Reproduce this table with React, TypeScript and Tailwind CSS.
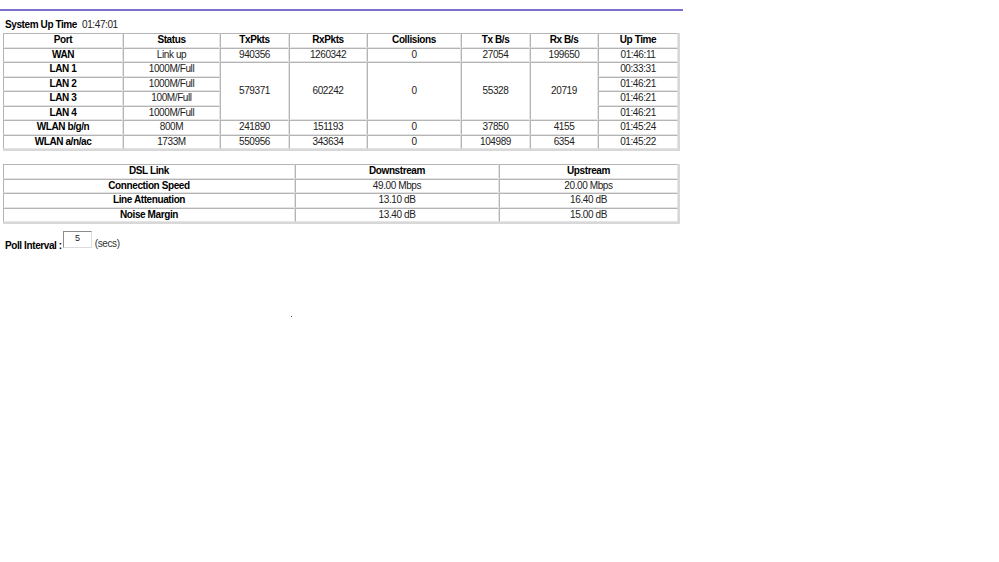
import React from 'react'

const ports = [
  { port: 'WAN', status: 'Link up', tx: '940356', rx: '1260342', col: '0', txb: '27054', rxb: '199650', up: '01:46:11' },
]

const lans = [
  { port: 'LAN 1', status: '1000M/Full', up: '00:33:31' },
  { port: 'LAN 2', status: '1000M/Full', up: '01:46:21' },
  { port: 'LAN 3', status: '100M/Full', up: '01:46:21' },
  { port: 'LAN 4', status: '1000M/Full', up: '01:46:21' },
]

const wlans = [
  { port: 'WLAN b/g/n', status: '800M', tx: '241890', rx: '151193', col: '0', txb: '37850', rxb: '4155', up: '01:45:24' },
  { port: 'WLAN a/n/ac', status: '1733M', tx: '550956', rx: '343634', col: '0', txb: '104989', rxb: '6354', up: '01:45:22' },
]

const dsl = [
  { label: 'Connection Speed', down: '49.00 Mbps', up: '20.00 Mbps' },
  { label: 'Line Attenuation', down: '13.10 dB', up: '16.40 dB' },
  { label: 'Noise Margin', down: '13.40 dB', up: '15.00 dB' },
]

const td = 'border-t border-l border-[#b4b4b4] border-r border-r-[#e4e4e4] border-b border-b-[#e4e4e4] p-0 text-center align-middle h-[14.5px] text-[#222]'
const th = td + ' font-bold text-black'

export default function App() {
  return (
    <div className="min-h-[562px] w-[999px] bg-white text-black text-[10px] leading-none tracking-[-0.4px]" style={{ fontFamily: '"Liberation Sans", Arial, sans-serif' }}>
      <div className="pt-[9px]">
        <div className="w-[683px] h-[2px] bg-[#7b6fd0]" />
      </div>

      <div className="pl-[5px] pt-[6px] h-[21px] flex items-center">
        <span className="font-bold">System Up Time</span>
        <span className="ml-[5px] text-[#222]">01:47:01</span>
      </div>

      <div className="pl-[3px] pt-[1px]">
        <table className="border-separate border-spacing-0 w-[675px] border-r-2 border-b-2 border-[#d8d8d8] table-fixed">
          <colgroup>
            <col className="w-[120px]" />
            <col className="w-[97px]" />
            <col className="w-[69px]" />
            <col className="w-[78px]" />
            <col className="w-[94px]" />
            <col className="w-[69px]" />
            <col className="w-[68px]" />
            <col className="w-[80px]" />
          </colgroup>
          <tbody>
            <tr>
              <td className={th}>Port</td>
              <td className={th}>Status</td>
              <td className={th}>TxPkts</td>
              <td className={th}>RxPkts</td>
              <td className={th}>Collisions</td>
              <td className={th}>Tx B/s</td>
              <td className={th}>Rx B/s</td>
              <td className={th}>Up Time</td>
            </tr>
            {ports.map((p) => (
              <tr key={p.port}>
                <td className={th}>{p.port}</td>
                <td className={td}>{p.status}</td>
                <td className={td}>{p.tx}</td>
                <td className={td}>{p.rx}</td>
                <td className={td}>{p.col}</td>
                <td className={td}>{p.txb}</td>
                <td className={td}>{p.rxb}</td>
                <td className={td}>{p.up}</td>
              </tr>
            ))}
            {lans.map((l, i) => (
              <tr key={l.port}>
                <td className={th}>{l.port}</td>
                <td className={td}>{l.status}</td>
                {i === 0 && (
                  <>
                    <td rowSpan={4} className={td}>579371</td>
                    <td rowSpan={4} className={td}>602242</td>
                    <td rowSpan={4} className={td}>0</td>
                    <td rowSpan={4} className={td}>55328</td>
                    <td rowSpan={4} className={td}>20719</td>
                  </>
                )}
                <td className={td}>{l.up}</td>
              </tr>
            ))}
            {wlans.map((p) => (
              <tr key={p.port}>
                <td className={th}>{p.port}</td>
                <td className={td}>{p.status}</td>
                <td className={td}>{p.tx}</td>
                <td className={td}>{p.rx}</td>
                <td className={td}>{p.col}</td>
                <td className={td}>{p.txb}</td>
                <td className={td}>{p.rxb}</td>
                <td className={td}>{p.up}</td>
              </tr>
            ))}
          </tbody>
        </table>
      </div>

      <div className="pl-[3px] pt-[13px]">
        <table className="border-separate border-spacing-0 w-[675px] border-r-2 border-b-2 border-[#d8d8d8] table-fixed">
          <colgroup>
            <col className="w-[292px]" />
            <col className="w-[204px]" />
            <col className="w-[179px]" />
          </colgroup>
          <tbody>
            <tr>
              <td className={th}>DSL Link</td>
              <td className={th}>Downstream</td>
              <td className={th}>Upstream</td>
            </tr>
            {dsl.map((d) => (
              <tr key={d.label}>
                <td className={th}>{d.label}</td>
                <td className={td}>{d.down}</td>
                <td className={td}>{d.up}</td>
              </tr>
            ))}
          </tbody>
        </table>
      </div>

      <div className="pl-[5px] pt-[7px] flex items-end">
        <span className="font-bold -mb-[3px]">Poll Interval :</span>
        <div className="ml-[1px] w-[29px] h-[17px] border-t border-l border-[#8c8c8c] border-r border-r-[#dcdcdc] border-b border-b-[#dcdcdc] flex justify-center pt-[2px] text-[9px] text-[#222]">5</div>
        <span className="ml-[3px] -mb-[1px] text-[#333]">(secs)</span>
      </div>

      <div className="pl-[291px] pt-[68px]">
        <div className="w-[1px] h-[1px] bg-[#555]" />
      </div>
    </div>
  )
}
